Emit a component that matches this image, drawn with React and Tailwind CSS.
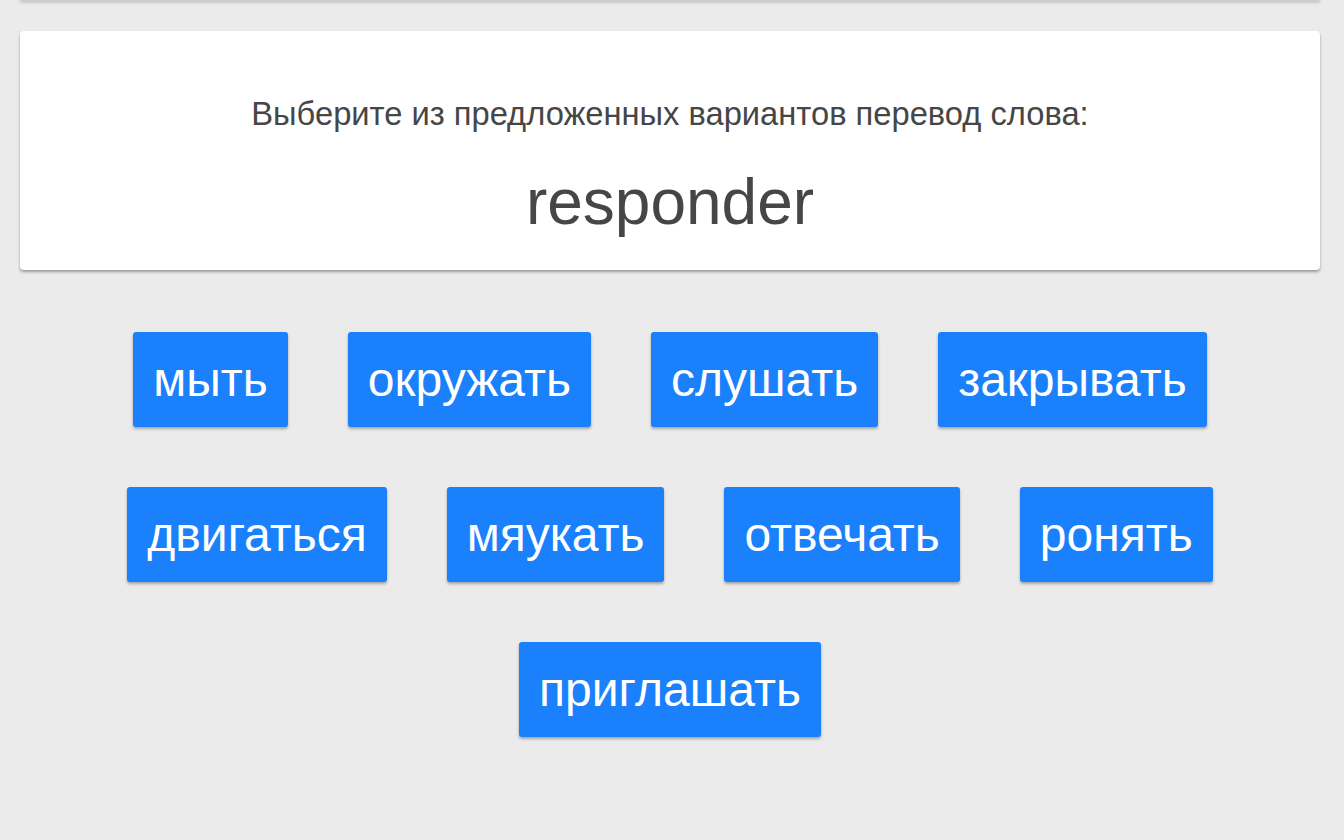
const words = [
  'мыть',
  'окружать',
  'слушать',
  'закрывать',
  'двигаться',
  'мяукать',
  'отвечать',
  'ронять',
  'приглашать',
];

const App = () => {
  return (
    <div className="min-h-[840px] bg-[#ebebeb] overflow-hidden" style={{ fontFamily: '"Liberation Sans", Arial, sans-serif' }}>
      {/* bottom of the card above */}
      <div className="ml-[20px] w-[1300px] h-[1px] bg-[#cfcfcf] shadow-[0_1px_3px_rgba(0,0,0,0.45)]"></div>

      {/* Question card */}
      <div className="ml-[20px] w-[1300px] mt-[30px] h-[239px] bg-white rounded-[4px] shadow-[0_2px_3px_rgba(0,0,0,0.35)] flex flex-col items-center text-[#464646]">
        <p className="mt-[67px] text-[32.7px] leading-none">Выберите из предложенных вариантов перевод слова:</p>
        <h1 className="mt-[39px] text-[64px] leading-none">responder</h1>
      </div>

      {/* Answers */}
      <div className="ml-[20px] w-[1300px] mt-[62px] flex flex-wrap justify-center gap-x-[60px] gap-y-[60px]">
        {words.map(w => (
          <button
            key={w}
            className="h-[95px] px-[20px] bg-[#1a80fc] text-white text-[48px] rounded-[3px] shadow-[0_2px_3px_rgba(0,0,0,0.3)] flex items-center"
          >
            {w}
          </button>
        ))}
      </div>
    </div>
  );
};

export default App;
